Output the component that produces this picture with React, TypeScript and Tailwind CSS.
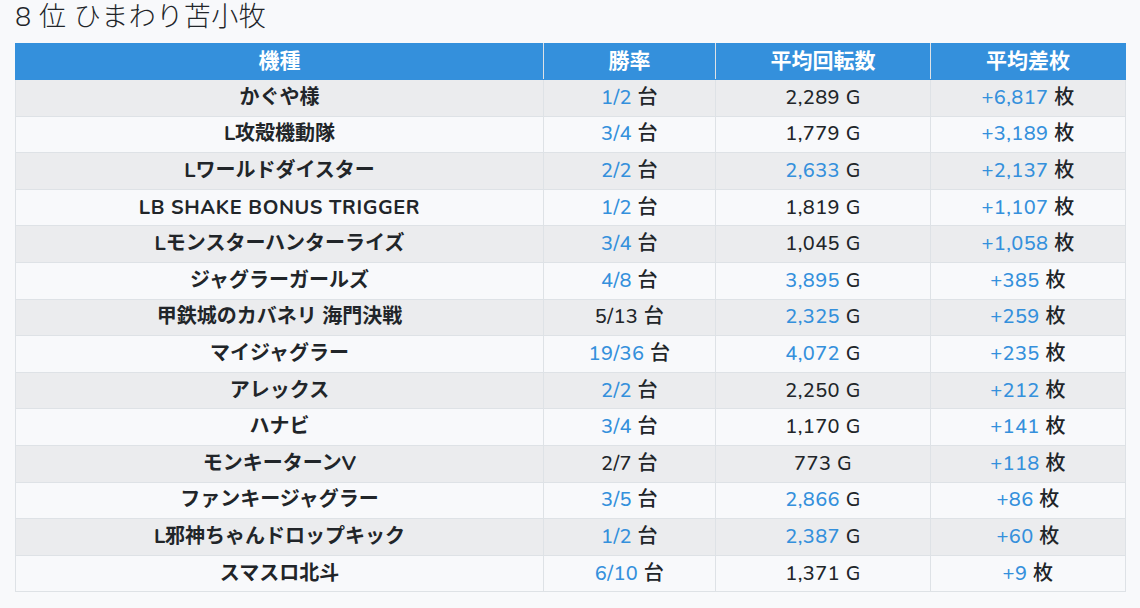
const rows: [string, string, boolean, string, boolean, string][] = [
  ["かぐや様", "1/2", true, "2,289", false, "+6,817"],
  ["L攻殻機動隊", "3/4", true, "1,779", false, "+3,189"],
  ["Lワールドダイスター", "2/2", true, "2,633", true, "+2,137"],
  ["LB SHAKE BONUS TRIGGER", "1/2", true, "1,819", false, "+1,107"],
  ["Lモンスターハンターライズ", "3/4", true, "1,045", false, "+1,058"],
  ["ジャグラーガールズ", "4/8", true, "3,895", true, "+385"],
  ["甲鉄城のカバネリ 海門決戦", "5/13", false, "2,325", true, "+259"],
  ["マイジャグラー", "19/36", true, "4,072", true, "+235"],
  ["アレックス", "2/2", true, "2,250", false, "+212"],
  ["ハナビ", "3/4", true, "1,170", false, "+141"],
  ["モンキーターンV", "2/7", false, "773", false, "+118"],
  ["ファンキージャグラー", "3/5", true, "2,866", true, "+86"],
  ["L邪神ちゃんドロップキック", "1/2", true, "2,387", true, "+60"],
  ["スマスロ北斗", "6/10", true, "1,371", false, "+9"],
];

const font = { fontFamily: '"Nunito", "Noto Sans", "Noto Sans CJK JP", sans-serif' };

export default function App() {
  return (
    <div className="min-h-screen w-[1140px] bg-[#f8f9fb] text-[#212529] px-[15px]" style={font}>
      <h1 className="h-[43px] text-[27px] font-light leading-[36px] tracking-[0.5px]">8 位 ひまわり苫小牧</h1>
      <table className="w-[1110px] border-collapse table-fixed text-[20px]">
        <colgroup>
          <col className="w-[528px]" />
          <col className="w-[172px]" />
          <col className="w-[215px]" />
          <col className="w-[195px]" />
        </colgroup>
        <thead>
          <tr className="bg-[#3490dc] text-white h-[36px]">
            {["機種", "勝率", "平均回転数", "平均差枚"].map((h) => (
              <th key={h} className="border border-[#dee2e6] border-t-[#3490dc] border-b-[#3490dc] first:border-l-[#3490dc] last:border-r-[#3490dc] text-[21px] font-bold p-0">
                {h}
              </th>
            ))}
          </tr>
        </thead>
        <tbody>
          {rows.map(([name, win, winBlue, spins, spinsBlue, diff], i) => (
            <tr key={name} className={i % 2 === 0 ? "bg-[#ebecee] h-[36.6px]" : "bg-[#f8f9fb] h-[36.6px]"}>
              <td className={/^[ -~]+$/.test(name) ? "border border-[#dee2e6] text-center font-bold tracking-[0.6px] p-0" : "border border-[#dee2e6] text-center font-bold p-0"}>
                {name}
              </td>
              <td className="border border-[#dee2e6] text-center font-medium tracking-[0.4px] p-0">
                <span className={winBlue ? "text-[#3490dc]" : ""}>{win}</span> 台
              </td>
              <td className="border border-[#dee2e6] text-center font-medium tracking-[0.4px] p-0">
                <span className={spinsBlue ? "text-[#3490dc]" : ""}>{spins}</span> G
              </td>
              <td className="border border-[#dee2e6] text-center font-medium tracking-[0.4px] p-0">
                <span className="text-[#3490dc]">{diff}</span> 枚
              </td>
            </tr>
          ))}
        </tbody>
      </table>
    </div>
  );
}
